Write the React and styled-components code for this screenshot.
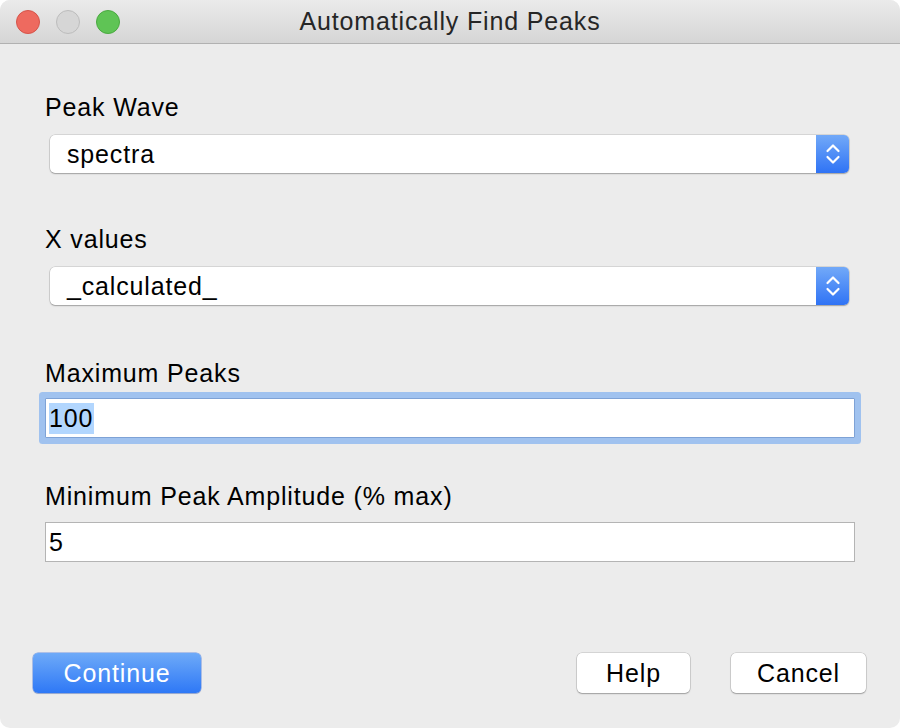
import React from "react";
import styled, { createGlobalStyle } from "styled-components";

const Global = createGlobalStyle`
  html, body {
    margin: 0;
    padding: 0;
    background: #ffffff;
  }
  body {
    font-family: "Liberation Sans", Arial, sans-serif;
    letter-spacing: 0.85px;
    -webkit-font-smoothing: antialiased;
  }
`;

const fields = [
  { label: "Peak Wave", kind: "popup", value: "spectra", gap: 52 },
  { label: "X values", kind: "popup", value: "_calculated_", gap: 54 },
  { label: "Maximum Peaks", kind: "input", value: "100", focused: true, gap: 44 },
  { label: "Minimum Peak Amplitude (% max)", kind: "input", value: "5", tight: true },
];

export default function App() {
  return (
    <>
      <Global />
      <Window>
        <TitleBar>
          <Lights>
            <Light $color="#ee6a5f" $edge="#d5544a" />
            <Light $color="#d6d6d6" $edge="#bcbcbc" />
            <Light $color="#5fc455" $edge="#4aa940" />
          </Lights>
          <Title>Automatically Find Peaks</Title>
        </TitleBar>

        <Body>
          <Form>
            {fields.map((f) => (
              <Field key={f.label} $gap={f.gap || 0}>
                <Label $tight={f.tight}>{f.label}</Label>
                {f.kind === "popup" ? (
                  <Popup>
                    <PopupText>{f.value}</PopupText>
                    <Stepper>
                      <svg width="18" height="26" viewBox="0 0 18 26">
                        <path
                          d="M3.5 10 L9 4.5 L14.5 10 M3.5 16 L9 21.5 L14.5 16"
                          fill="none"
                          stroke="#ffffff"
                          strokeWidth="2.2"
                          strokeLinecap="round"
                          strokeLinejoin="round"
                        />
                      </svg>
                    </Stepper>
                  </Popup>
                ) : (
                  <TextBox $focused={f.focused}>
                    {f.focused ? <Selected>{f.value}</Selected> : f.value}
                  </TextBox>
                )}
              </Field>
            ))}
          </Form>

          <Footer>
            <Button $primary>Continue</Button>
            <RightButtons>
              <Button $width={113}>Help</Button>
              <Button $width={135}>Cancel</Button>
            </RightButtons>
          </Footer>
        </Body>
      </Window>
    </>
  );
}

const Window = styled.div`
  width: 900px;
  height: 728px;
  border-radius: 10px;
  overflow: hidden;
  background: #ececec;
  display: flex;
  flex-direction: column;
`;

const TitleBar = styled.div`
  height: 43px;
  flex: none;
  position: relative;
  display: flex;
  align-items: center;
  justify-content: center;
  background: linear-gradient(#ebebeb, #d5d5d5);
  border-bottom: 1px solid #b1b1b1;
`;

const Lights = styled.div`
  position: absolute;
  left: 16px;
  top: 10px;
  display: flex;
  gap: 16px;
`;

const Light = styled.span`
  width: 24px;
  height: 24px;
  border-radius: 50%;
  box-sizing: border-box;
  background: ${(p) => p.$color};
  border: 1px solid ${(p) => p.$edge};
`;

const Title = styled.div`
  font-size: 25px;
  color: #262626;
`;

const Body = styled.div`
  flex: 1;
  display: flex;
  flex-direction: column;
  padding: 49px 34px 0 33px;
`;

const Form = styled.div`
  display: flex;
  flex-direction: column;
  padding-left: 12px;
  padding-right: 11px;
`;

const Field = styled.div`
  display: flex;
  flex-direction: column;
  margin-bottom: ${(p) => p.$gap}px;
`;

const Label = styled.div`
  font-size: 25px;
  line-height: 28px;
  color: #000;
  margin-bottom: ${(p) => (p.$tight ? 12 : 14)}px;
`;

const Popup = styled.div`
  margin: 0 6px 0 5px;
  height: 38px;
  display: flex;
  align-items: stretch;
  background: #fff;
  border-radius: 5px;
  box-shadow: 0 0 0 0.5px rgba(0, 0, 0, 0.18), 0 1px 1.5px rgba(0, 0, 0, 0.25);
  overflow: hidden;
`;

const PopupText = styled.div`
  flex: 1;
  display: flex;
  align-items: center;
  padding-left: 17px;
  font-size: 25px;
  color: #000;
`;

const Stepper = styled.div`
  width: 33px;
  display: flex;
  align-items: center;
  justify-content: center;
  background: linear-gradient(#72a9f8, #2f73f5);
`;

const TextBox = styled.div`
  height: 40px;
  box-sizing: border-box;
  display: flex;
  align-items: center;
  padding-left: 3px;
  background: #fff;
  font-size: 25px;
  color: #000;
  border: 1px solid ${(p) => (p.$focused ? "#7ea2d6" : "#b4b4b4")};
  box-shadow: ${(p) => (p.$focused ? "0 0 0 6px #a0c2ef" : "none")};
  border-radius: ${(p) => (p.$focused ? "1px" : "0")};
  margin-top: ${(p) => (p.$focused ? "-3px" : "0")};
`;

const Selected = styled.span`
  background: #b2d6fe;
  line-height: 31px;
  padding-right: 1px;
`;

const Footer = styled.div`
  margin-top: auto;
  margin-bottom: 35px;
  display: flex;
  justify-content: space-between;
  align-items: center;
`;

const RightButtons = styled.div`
  display: flex;
  gap: 41px;
`;

const Button = styled.button`
  width: ${(p) => (p.$primary ? 168 : p.$width)}px;
  height: 40px;
  border-radius: 5px;
  font-family: inherit;
  font-size: 25px;
  letter-spacing: 0.85px;
  padding: 0;
  border: none;
  color: ${(p) => (p.$primary ? "#fff" : "#000")};
  background: ${(p) =>
    p.$primary ? "linear-gradient(#6eaaf8, #2e78f6)" : "#ffffff"};
  box-shadow: ${(p) =>
    p.$primary
      ? "0 0 0 0.5px rgba(30, 90, 220, 0.6), 0 1px 1px rgba(0,0,0,0.15)"
      : "0 0 0 0.5px rgba(0, 0, 0, 0.2), 0 1px 1.5px rgba(0, 0, 0, 0.25)"};
`;
